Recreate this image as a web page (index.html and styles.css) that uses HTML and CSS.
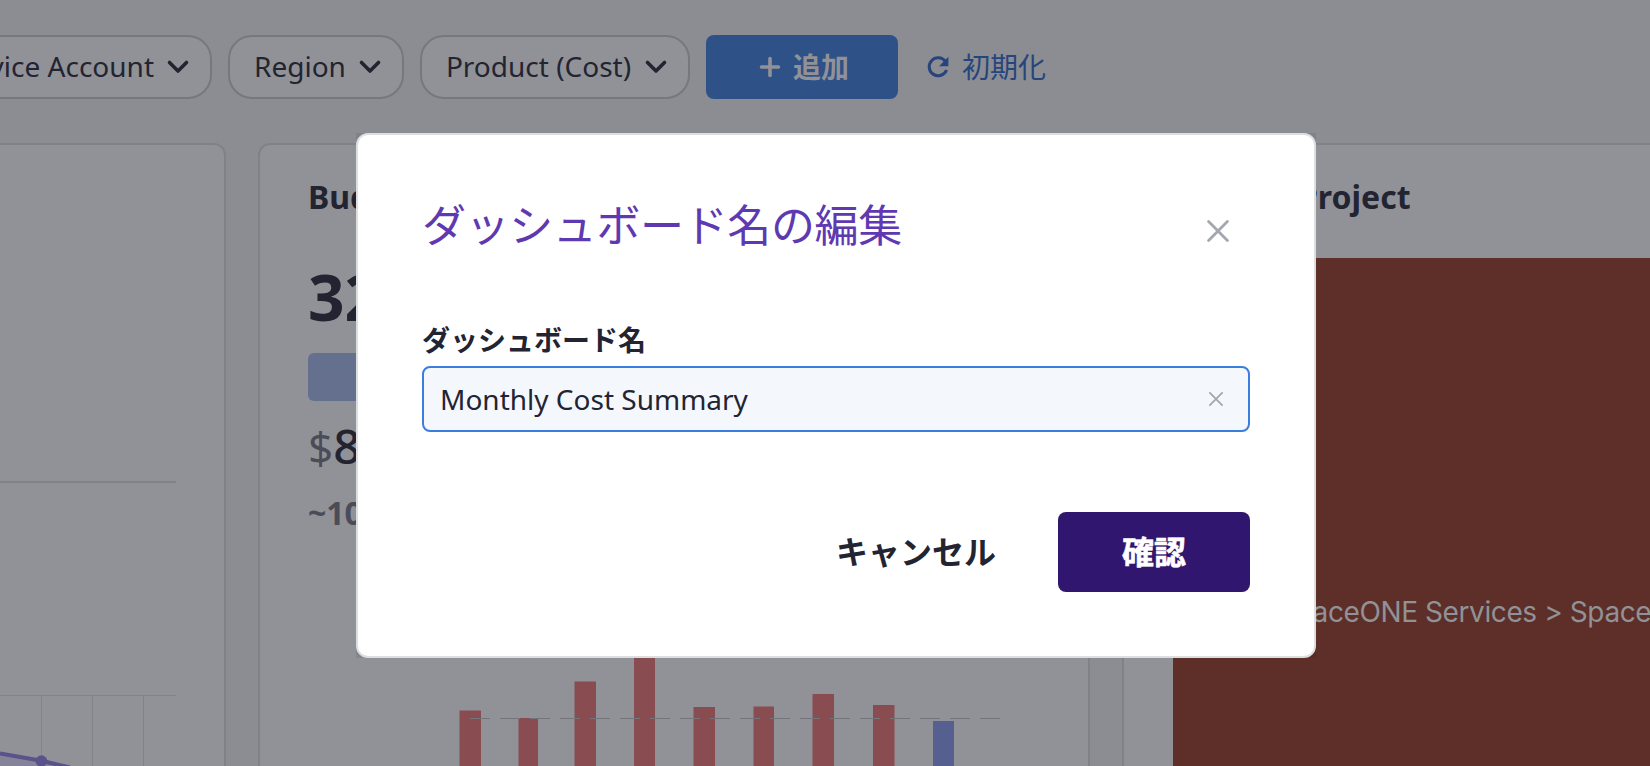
FILE: index.html
```html
<!DOCTYPE html>
<html lang="ja">
<head>
<meta charset="utf-8">
<title>Monthly Cost Summary</title>
<link rel="stylesheet" href="styles.css">
</head>
<body>
<div class="page">
  <header class="toolbar">
    <div class="chip chip-cut"><span>Service Account</span><svg class="chevron" viewBox="0 0 24 24"><path d="M3.500 7.500 12 16l8.500-8.500"/></svg></div>
    <div class="chip"><span>Region</span><svg class="chevron" viewBox="0 0 24 24"><path d="M3.500 7.500 12 16l8.500-8.500"/></svg></div>
    <div class="chip chip-product"><span>Product (Cost)</span><svg class="chevron" viewBox="0 0 24 24"><path d="M3.500 7.500 12 16l8.500-8.500"/></svg></div>
    <button class="add"><svg class="plus" viewBox="0 0 22 22"><path d="M11 2.500v17M2.500 11h17"/></svg><span>追加</span></button>
    <div class="reset"><svg class="refresh" viewBox="0 0 24 24"><path class="arc" d="M19.400 6.300A9 9 0 1 0 20.600 15"/><path class="head" d="M22.400 1.800v9.400h-9.400z"/></svg><span>初期化</span></div>
  </header>
  <main class="cards">
    <section class="card card-trend">
      <div class="rule"></div>
      <svg class="trend" viewBox="0 0 176 71">
        <path class="area" d="M0 58.500 41.400 65.300 66 71H0z"/>
        <path class="grid" d="M0 .5H176M41.500 0V71M92.500 0V71M143.500 0V71"/>
        <path class="line" d="M0 58.500 41.400 65.800 70 72.500"/>
        <circle class="dot" cx="41.400" cy="66" r="5.800"/>
      </svg>
    </section>
    <section class="card card-budget">
      <h2>Budget</h2>
      <div class="count">32</div>
      <div class="meter"></div>
      <div class="amount"><span class="cur">$</span>8</div>
      <div class="percent">~100%</div>
      <svg class="bars" viewBox="0 0 734 116">
        <g class="red">
          <path d="M151.500 60.500h21.500V116h-21.500zM210.500 68h19.500v48h-19.500zM266.500 31.500H288V116h-21.500zM326 0h21v116h-21zM385.500 57H407v59h-21.500zM445.500 56.500H466V116h-20.500zM504.500 44H526v72h-21.500zM565 55h21.500v61H565z"/>
        </g>
        <path class="blue" d="M625 71h21v45h-21z"/>
        <path class="dash" d="M162 68.500H693"/>
      </svg>
    </section>
    <section class="card card-project">
      <h2>Cost by Project</h2>
      <div class="treemap"><span>SpaceONE Services &gt; Space</span></div>
    </section>
  </main>
</div>
<div class="backdrop">
  <div class="frame">
    <div class="dialog" role="dialog">
      <div class="head-row">
        <h1>ダッシュボード名の編集</h1>
        <svg class="close" viewBox="0 0 22 22"><path d="M1.600 1.600 20.400 20.400M20.400 1.600 1.600 20.400"/></svg>
      </div>
      <label class="label">ダッシュボード名</label>
      <div class="field"><span>Monthly Cost Summary</span><svg class="clear" viewBox="0 0 14 14"><path d="M.9.9 13.100 13.100M13.100.9.9 13.100"/></svg></div>
      <div class="actions">
        <button class="cancel">キャンセル</button>
        <button class="confirm">確認</button>
      </div>
    </div>
  </div>
</div>
</body>
</html>
```
FILE: styles.css
```css
* { box-sizing: border-box; }
body {
  margin: 0;
  font-family: "Noto Sans", "Noto Sans CJK JP", sans-serif;
  font-size: 28px;
  color: #232432;
  background: #8c8d92;
}
button { font: inherit; border: 0; padding: 0; }
svg { flex: none; fill: none; }
h1, h2 { margin: 0; }

.page { width: 1650px; height: 766px; overflow: hidden; display: flex; flex-direction: column; gap: 44px; }
.toolbar { display: flex; gap: 16px; padding-top: 35px; height: 99px; white-space: nowrap; }
.chip {
  display: flex; align-items: center; gap: 12px; height: 64px;
  padding: 0 20px 0 24px;
  background: #919297; border: 2px solid #77787d; border-radius: 24px;
}
.chip span { line-height: 38px; padding-bottom: 2px; }
.chip-cut { width: 212px; justify-content: flex-end; border-left: 0; border-radius: 0 24px 24px 0; overflow: hidden; }
.chip-product { gap: 13px; }
.chevron { width: 24px; height: 24px; stroke: #232432; stroke-width: 3.6; stroke-linecap: round; stroke-linejoin: round; }
.add {
  width: 192px; height: 64px; border-radius: 8px; background: #2e5188; color: #919297;
  font-weight: 700; display: flex; align-items: center; justify-content: center; gap: 12px; padding-left: 4px;
}
.add span, .reset span { line-height: 40px; }
.plus { width: 22px; height: 22px; stroke: #919297; stroke-width: 3.6; stroke-linecap: round; }
.reset { display: flex; align-items: center; gap: 12px; height: 64px; padding-left: 12px; color: #27457c; }
.refresh { width: 24px; height: 24px; }
.refresh .arc { stroke: #27457c; stroke-width: 3; }
.refresh .head { fill: #27457c; }

.cards { display: flex; gap: 32px; height: 623px; }
.card { flex: none; background: #919297; border: 2px solid #818287; border-bottom: 0; border-radius: 12px 12px 0 0; height: 100%; }
.card h2 { font-size: 32px; line-height: 44px; font-weight: 700; white-space: nowrap; }
.card-trend { width: 226px; border-left: 0; border-top-left-radius: 0; display: flex; flex-direction: column; justify-content: space-between; padding-top: 336px; }
.rule { width: 176px; height: 2px; background: #818287; }
.trend { width: 176px; height: 71px; }
.trend .area { fill: #85839a; }
.trend .grid { stroke: #828388; stroke-width: 1; }
.trend .line { stroke: #58538a; stroke-width: 4; }
.trend .dot { fill: #58538a; }

.card-budget { width: 832px; padding: 30px 48px 0; display: flex; flex-direction: column; overflow: hidden; }
.count { margin-top: 38px; font-size: 64px; line-height: 80px; font-weight: 700; }
.meter { margin-top: 16px; height: 48px; flex: none; border-radius: 6px; background: #65708f; }
.amount { margin-top: 13px; font-size: 48px; line-height: 64px; font-weight: 500; }
.amount .cur { font-size: 44px; font-weight: 400; color: #4b4c58; }
.percent { margin-top: 14px; font-size: 32px; line-height: 40px; font-weight: 700; color: #4b4c58; }
.bars { margin-top: auto; flex: none; width: 734px; height: 116px; }
.bars .red { fill: #894c50; }
.bars .blue { fill: #556091; }
.bars .dash { stroke: #74757b; stroke-dasharray: 20 10; }

.card-project { width: 900px; padding: 30px 0 0 49px; display: flex; flex-direction: column; }
.treemap {
  margin-top: 39px; flex: 1; background: #5d2f28; color: #919297;
  font-family: Inter, "Liberation Sans", sans-serif; line-height: 40px; letter-spacing: -.4px;
  padding: 334px 0 0 105px; white-space: nowrap;
}

.backdrop { position: fixed; inset: 0; display: flex; align-items: flex-start; padding: 133px 0 0 356px; }
.frame { width: 960px; height: 525px; background: rgba(0, 0, 0, .08); }
.dialog {
  height: 100%; border: 2px solid #dddee0; border-radius: 12px; background: #fff;
  padding: 58px 64px 64px; display: flex; flex-direction: column;
}
.head-row { display: flex; justify-content: space-between; align-items: center; height: 64px; padding-right: 21px; }
h1 { font-size: 44px; line-height: 64px; font-weight: 400; letter-spacing: -.38px; color: #5f39b1; }
.close { width: 22px; height: 22px; margin-top: 12px; stroke: #a5a7b0; stroke-width: 2.8; stroke-linecap: round; }
.label { margin-top: 65px; font-weight: 700; line-height: 36px; }
.field {
  margin-top: 8px; height: 66px; border: 2px solid #3a7de0; border-radius: 8px; background: #f4f7fc;
  display: flex; align-items: center; justify-content: space-between; padding: 0 25px 0 16px;
}
.clear { width: 14px; height: 14px; stroke: #a5a7b0; stroke-width: 1.8; stroke-linecap: round; }
.actions { margin-top: 80px; display: flex; justify-content: flex-end; align-items: center; gap: 62px; font-size: 32px; font-weight: 700; }
.cancel { background: none; color: #232432; padding-bottom: 4px; }
.confirm { width: 192px; height: 80px; padding-bottom: 4px; border-radius: 8px; background: #30166e; color: #fff; -webkit-text-stroke: .6px #fff; }
```
